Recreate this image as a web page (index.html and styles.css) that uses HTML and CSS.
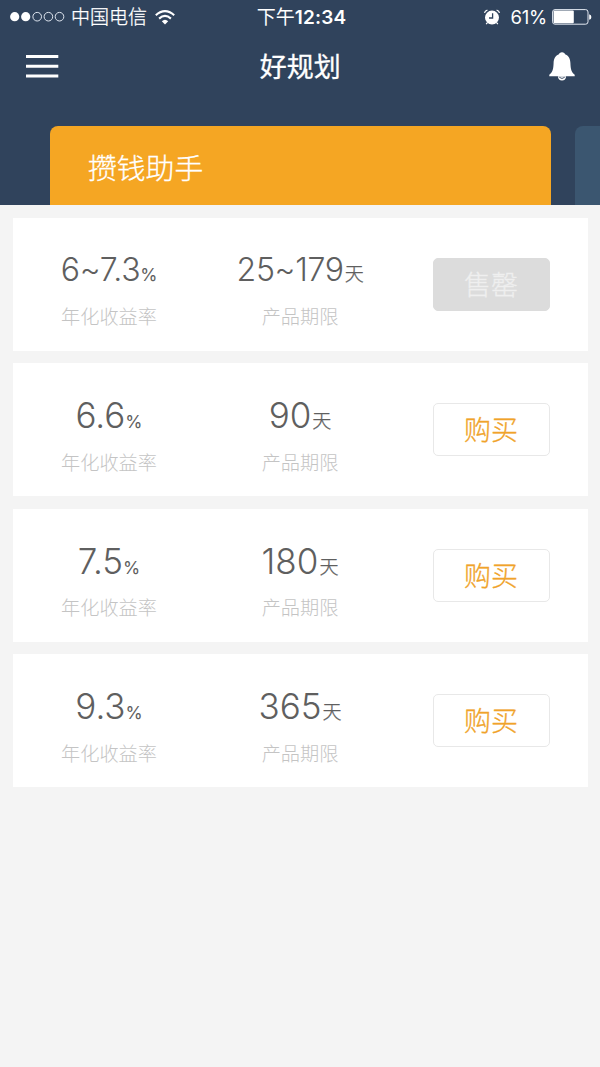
FILE: index.html
```html
<!DOCTYPE html>
<html lang="zh-CN">
<head>
<meta charset="utf-8">
<title>好规划</title>
<link rel="stylesheet" href="styles.css">
</head>
<body>
<header class="header">
  <div class="status">
    <div class="status-left">
      <svg class="signal" width="56" height="12" viewBox="0 0 56 12">
        <g fill="#fff"><circle cx="4.7" cy="5.7" r="4.6"/><circle cx="15.7" cy="5.7" r="4.6"/></g>
        <g fill="none" stroke="#dfe6f0" stroke-width="1"><circle cx="27.2" cy="5.7" r="4.3"/><circle cx="38.4" cy="5.7" r="4.3"/><circle cx="49.5" cy="5.7" r="4.3"/></g>
      </svg>
      <span class="carrier">中国电信</span>
      <svg class="wifi" width="20" height="15" viewBox="0 0 20 15">
        <g fill="none" stroke="#fff" stroke-width="2.1"><path d="M.8 5.2Q10-2.9 19.2 5.2"/><path d="M4.1 8.6Q10 3.3 15.9 8.6"/></g>
        <path d="M6.8 11.3Q10 8.3 13.2 11.3L10 14.5Z" fill="#fff"/>
      </svg>
    </div>
    <div class="clock">下午<b>12:34</b></div>
    <div class="status-right">
      <svg class="alarm" width="18" height="17" viewBox="0 0 18 17">
        <circle cx="9" cy="8.6" r="7" fill="#fff"/>
        <path d="M1.5 3.9Q2 1.8 4.4 1.2M16.5 3.9Q16 1.8 13.6 1.2M4.2 13.8L3.2 15.2M13.8 13.8L14.8 15.2" fill="none" stroke="#fff" stroke-width="1.3"/>
        <path d="M9.6 4.2V9H6" fill="none" stroke="#30435c" stroke-width="1.3"/>
      </svg>
      <span class="percent">61%</span>
      <svg class="battery" width="40" height="16" viewBox="0 0 40 16">
        <rect x=".6" y=".6" width="35.4" height="14.6" rx="2.4" fill="none" stroke="#e3e9f2" stroke-width="1"/>
        <rect x="1.6" y="1.6" width="20.2" height="12.6" rx="1" fill="#fff"/>
        <path d="M37.2 5.2Q39.4 5.6 39.4 8T37.2 10.8Z" fill="#fff"/>
      </svg>
    </div>
  </div>
  <nav class="nav">
    <svg class="menu" width="33" height="24" viewBox="0 0 33 24"><path d="M0 1.5H32.3M0 11.3H32.3M0 20.9H32.3" stroke="#fff" stroke-width="3"/></svg>
    <h1 class="title">好规划</h1>
    <svg class="bell" width="26" height="30" viewBox="0 0 26 30">
      <path d="M13 .2C14.7.2 15.9 1.2 16.4 2.6C19.9 4 21.3 7.2 21.4 11C21.6 17 22.4 20.2 25.7 22.8V24.2H.3V22.8C3.6 20.2 4.4 17 4.6 11C4.7 7.2 6.1 4 9.6 2.6C10.1 1.2 11.3.2 13 .2Z" fill="#fff"/>
      <path d="M8.9 24.2Q9.3 28.6 13 28.6T17.1 24.2" fill="#fff"/>
      <path d="M10.3 25.3Q13 27.6 15.7 25.3" fill="none" stroke="#30435c" stroke-width=".9"/>
    </svg>
  </nav>
  <div class="tabs">
    <div class="tab tab-active">攒钱助手</div>
    <div class="tab"></div>
  </div>
</header>
<main class="list">
  <section class="card card-range">
    <div class="col"><div class="value">6~7.3<small class="pct">%</small></div><div class="label">年化收益率</div></div>
    <div class="col"><div class="value">25~179<small>天</small></div><div class="label">产品期限</div></div>
    <div class="col action"><button class="btn btn-sold">售罄</button></div>
  </section>
  <section class="card">
    <div class="col"><div class="value">6.6<small class="pct">%</small></div><div class="label">年化收益率</div></div>
    <div class="col"><div class="value">90<small>天</small></div><div class="label">产品期限</div></div>
    <div class="col action"><button class="btn">购买</button></div>
  </section>
  <section class="card">
    <div class="col"><div class="value">7.5<small class="pct">%</small></div><div class="label">年化收益率</div></div>
    <div class="col"><div class="value">180<small>天</small></div><div class="label">产品期限</div></div>
    <div class="col action"><button class="btn">购买</button></div>
  </section>
  <section class="card">
    <div class="col"><div class="value">9.3<small class="pct">%</small></div><div class="label">年化收益率</div></div>
    <div class="col"><div class="value">365<small>天</small></div><div class="label">产品期限</div></div>
    <div class="col action"><button class="btn">购买</button></div>
  </section>
</main>
</body>
</html>
```
FILE: styles.css
```css
* { box-sizing: border-box; }
body {
  margin: 0;
  min-height: 1067px;
  background: #f4f4f4;
  font-family: Inter, "Noto Sans CJK SC", sans-serif;
  overflow: hidden;
}
svg { display: block; flex: none; }
.header { height: 205px; background: #30435c; color: #fff; overflow: hidden; }
.status {
  height: 33px;
  padding: 0 8px 0 10px;
  display: grid;
  grid-template-columns: 1fr auto 1fr;
  align-items: center;
  font-size: 19px;
  line-height: 33px;
}
.status-left, .status-right { display: flex; align-items: center; }
.status-right { justify-content: flex-end; }
.carrier { margin-left: 5px; padding-top: 1px; font-weight: 300; -webkit-text-stroke: .3px; }
.wifi { margin-left: 8px; }
.clock { padding: 0 0 0 1px; }
.clock b { font-weight: 600; font-size: 19px; letter-spacing: .2px; }
.alarm { margin-right: 9px; }
.percent { font-size: 18.5px; margin-right: 5px; letter-spacing: -.2px; }
.nav {
  height: 67px;
  padding: 0 25.5px 0 26px;
  display: grid;
  grid-template-columns: 1fr auto 1fr;
  align-items: center;
}
.bell { justify-self: end; }
.title { margin: 0; padding-top: 3px; font-size: 27px; line-height: 40px; font-weight: 400; -webkit-text-stroke: .3px; }
.tabs { display: flex; gap: 24px; padding: 26px 0 0 49.5px; }
.tab {
  flex: 0 0 501px;
  height: 79px;
  border-radius: 8px 8px 0 0;
  background: #3b5670;
  padding-left: 38.5px;
  font-size: 28.8px;
  font-weight: 300;
  -webkit-text-stroke: .3px;
  line-height: 85px;
}
.tab-active { background: #f5a623; }
.list { padding: 12.5px; display: flex; flex-direction: column; gap: 12.6px; }
.card { height: 133px; background: #fff; display: grid; grid-template-columns: repeat(3, 191px); justify-content: center; }
.col { text-align: center; padding-top: 32px; }
.value { height: 40px; line-height: 40px; font-size: 35px; font-weight: 300; color: #5f5f5f; white-space: nowrap; }
.value small { font-size: 19px; font-weight: 300; margin-left: 1px; -webkit-text-stroke: .3px; }
.value .pct { font-size: 17.5px; font-weight: 400; margin-left: 0; -webkit-text-stroke: 0; }
.card-range .value { font-size: 32px; letter-spacing: -.3px; }
.label { margin-top: 14.5px; line-height: 26px; font-size: 19.2px; font-weight: 300; color: #c4c4c4; }
.action { padding-top: 40px; }
.btn {
  width: 117px;
  height: 53px;
  padding: 2px 0 0;
  border: 1.5px solid #e8e8e8;
  border-radius: 5px;
  background: #fff;
  color: #f0a32a;
  font: 300 27px/49px Inter, "Noto Sans CJK SC", sans-serif;
  -webkit-text-stroke: .3px;
}
.btn-sold { background: #dcdcdc; border-color: #dcdcdc; color: #efefef; }
```
